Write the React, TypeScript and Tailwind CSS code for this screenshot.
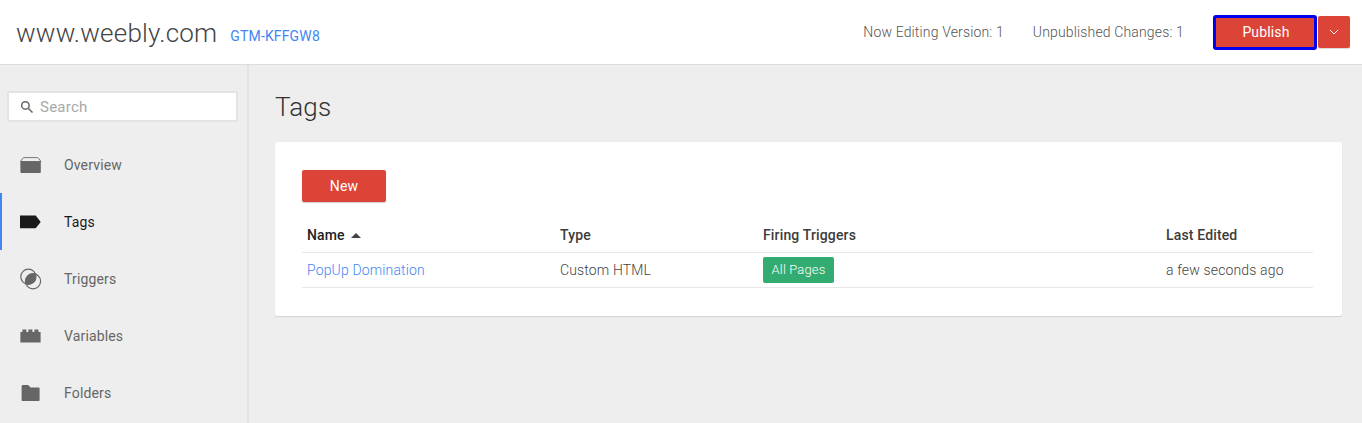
import React from "react";

const Nav = ({ icon, label, active }: { icon: React.ReactNode; label: string; active?: boolean }) => (
  <div className={`h-[57px] flex items-center border-l-2 pl-[18px] ${active ? "border-[#4285f4] text-[#1a1a1a]" : "border-transparent text-[#666666]"}`}>
    <span className="w-[44px] h-[22px] flex items-center">{icon}</span>
    <span className="text-[14px] leading-none">{label}</span>
  </div>
);

const OverviewIcon = () => (
  <svg width="22" height="16" viewBox="0 0 22 16" fill="#666666">
    <path d="M3.6 0.6h13.8c.4 0 .8.2 1 .5L21 4.6H0.4L3 1.1c.2-.3.3-.5.6-.5z" fill="none" stroke="#777777" strokeWidth="1" />
    <path d="M0.4 5.2c0-.6.4-1 1-1h18.4c.6 0 1 .4 1 1V15c0 .6-.4 1-1 1H1.4c-.6 0-1-.4-1-1z" />
  </svg>
);
const TagIcon = () => (
  <svg width="22" height="14" viewBox="0 0 22 14" fill="#1a1a1a">
    <path d="M0 0.5h15.7L20.7 7l-5 6.2H0z" />
  </svg>
);
const TriggerIcon = () => (
  <svg width="22" height="22" viewBox="0 0 22 22" fill="none" stroke="#666666" strokeWidth="1.2">
    <circle cx="8.4" cy="8.7" r="7.6" />
    <circle cx="13" cy="13.3" r="7.6" />
    <path d="M5.84 15.86A7.6 7.6 0 0 1 15.56 6.14 7.6 7.6 0 0 1 5.84 15.86z" fill="#666666" stroke="none" />
  </svg>
);
const VarIcon = () => (
  <svg width="22" height="14" viewBox="0 0 22 14" fill="#666666">
    <path d="M0.4 3h2V0.5h4V3h2V0.5h4V3h2V0.5h4V3h2.2v10.5H0.4z" />
  </svg>
);
const FolderIcon = () => (
  <svg width="22" height="16" viewBox="0 0 22 16" fill="#666666">
    <path d="M1.6 1.5C1.6 .7 2.2 0 3 0h5.2l2.4 2.4h8c.6 0 1 .5 1 1.1V15c0 .6-.4 1-1 1H2.6c-.6 0-1-.4-1-1z" />
  </svg>
);

export default function App() {
  return (
    <div className="w-[1362px] h-[423px] overflow-hidden bg-[#eeeeee] flex flex-col font-['Roboto',sans-serif] text-[14px] tracking-[0.15px]">
      <header className="h-[65px] shrink-0 bg-white border-b border-[#dddddd] flex items-center pl-4 pr-[12px]">
        <span className="text-[26px] font-light text-[#444444] leading-none mr-[13px] relative top-[1px] tracking-[0.2px]">www.weebly.com</span>
        <span className="text-[14px] text-[#4285f4] relative top-[4px]">GTM-KFFGW8</span>
        <span className="ml-auto text-[14px] font-light text-[#555555]">Now Editing Version: 1</span>
        <span className="ml-[29px] text-[14px] font-light text-[#555555]">Unpublished Changes: 1</span>
        <button className="ml-[29px] self-start mt-[15px] w-[104px] h-[35px] rounded-[3px] bg-[#db4437] border-[3px] border-[#0000ee] text-white text-[14px] flex items-center justify-center pl-[2px]">
          Publish
        </button>
        <button className="ml-[1px] self-start mt-[16px] w-[32px] h-[32px] rounded-[2px] bg-[#db4437] flex items-center justify-center shadow-[0_1px_1px_rgba(0,0,0,0.15)]">
          <svg width="10" height="6" viewBox="0 0 10 6" fill="none" stroke="white" strokeWidth="1">
            <path d="M1 1l4 4 4-4" />
          </svg>
        </button>
      </header>
      <div className="flex-1 flex min-h-0">
        <aside className="w-[249px] shrink-0 border-r-2 border-[#e2e2e2] pt-[26px]">
          <div className="ml-[7px] w-[231px] h-[31px] bg-white border-2 border-[#e3e3e3] rounded-[2px] flex items-center pl-[10px]">
            <svg width="14" height="14" viewBox="0 0 15 15" fill="none" stroke="#666666" strokeWidth="1.6" className="mr-[6px] ml-[1px]">
              <circle cx="5.8" cy="5.8" r="4" />
              <path d="M8.8 8.8l4.6 4.6" />
            </svg>
            <span className="text-[15px] text-[#a8a8a8] relative top-[1px] tracking-[0.25px]">Search</span>
          </div>
          <nav className="mt-[14px]">
            <Nav icon={<OverviewIcon />} label="Overview" />
            <Nav icon={<TagIcon />} label="Tags" active />
            <Nav icon={<TriggerIcon />} label="Triggers" />
            <Nav icon={<VarIcon />} label="Variables" />
            <Nav icon={<FolderIcon />} label="Folders" />
          </nav>
        </aside>
        <main className="flex-1 pl-[26px] pr-[20px]">
          <h1 className="text-[26px] font-light text-[#333333] leading-none mt-[29px] mb-[22px]">Tags</h1>
          <div className="w-[1067px] h-[174px] bg-white rounded-[2px] shadow-[0_1px_1px_rgba(0,0,0,0.12)] px-[27px] pt-[28px]">
            <button className="w-[84px] h-[32px] rounded-[2px] bg-[#db4437] text-white text-[14px] shadow-[0_1px_1px_rgba(0,0,0,0.2)]">New</button>
            <div className="w-[1011px] mt-[15px]">
              <div className="grid grid-cols-[253px_203px_403px_152px] h-[36px] pt-[2px] items-center border-b border-[#e8e8e8] font-medium text-[#3c3c3c]">
                <span className="pl-[5px] flex items-center text-[#222222]">
                  Name
                  <svg width="10" height="5" viewBox="0 0 10 5" fill="#444444" className="ml-[6px]"><path d="M5 0l5 5H0z" /></svg>
                </span>
                <span className="pl-[5px]">Type</span>
                <span className="pl-[5px]">Firing Triggers</span>
                <span className="pl-[5px]">Last Edited</span>
              </div>
              <div className="grid grid-cols-[253px_203px_403px_152px] h-[35px] items-center border-b border-[#e8e8e8] font-light">
                <span className="pl-[5px] text-[#4285f4]">PopUp Domination</span>
                <span className="pl-[5px] text-[#444444]">Custom HTML</span>
                <span className="pl-[5px]">
                  <span className="inline-flex items-center justify-center w-[71px] h-[26px] rounded-[2px] bg-[#33ac71] text-white text-[13px]">All Pages</span>
                </span>
                <span className="pl-[5px] text-[#444444] whitespace-nowrap">a few seconds ago</span>
              </div>
            </div>
          </div>
        </main>
      </div>
    </div>
  );
}
